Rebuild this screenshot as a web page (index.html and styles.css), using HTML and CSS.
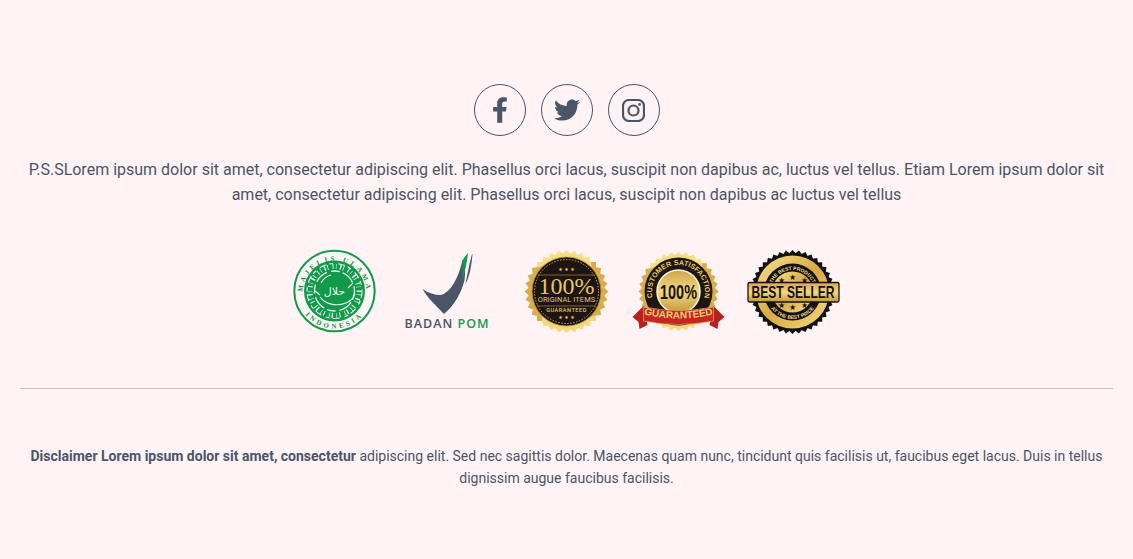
FILE: index.html
```html
<!DOCTYPE html>
<html lang="en">
<head>
    <meta charset="UTF-8">
    <meta name="viewport" content="width=device-width, initial-scale=1.0">
    <title>Footer</title>
    <link rel="stylesheet" href="styles.css">
</head>
<body>
    <footer class="footer">
        <div class="socials">
            <a class="social" href="#">
                <svg class="social-icon" viewBox="0 0 320 512" width="16" height="26"><path d="M279.14 288l14.22-92.66h-88.91v-60.13c0-25.35 12.42-50.06 52.24-50.06h40.42V6.26S260.43 0 225.36 0c-73.22 0-121.08 44.38-121.08 124.72v70.62H22.89V288h81.39v224h100.17V288z"/></svg>
            </a>
            <a class="social" href="#">
                <svg class="social-icon" viewBox="0 0 512 512" width="26" height="26"><path d="M459.37 151.716c.325 4.548.325 9.097.325 13.645 0 138.72-105.583 298.558-298.558 298.558-59.452 0-114.68-17.219-161.137-47.106 8.447.974 16.568 1.299 25.34 1.299 49.055 0 94.213-16.568 130.274-44.832-46.132-.975-84.792-31.188-98.112-72.772 6.498.974 12.995 1.624 19.818 1.624 9.421 0 18.843-1.3 27.614-3.573-48.081-9.747-84.143-51.98-84.143-102.985v-1.299c13.969 7.797 30.214 12.67 47.431 13.319-28.264-18.843-46.781-51.005-46.781-87.391 0-19.492 5.197-37.36 14.294-52.954 51.655 63.675 129.3 105.258 216.365 109.807-1.624-7.797-2.599-15.918-2.599-24.04 0-57.828 46.782-104.934 104.934-104.934 30.213 0 57.502 12.67 76.67 33.137 23.715-4.548 46.456-13.32 66.599-25.34-7.798 24.366-24.366 44.833-46.132 57.827 21.117-2.273 41.584-8.122 60.426-16.243-14.292 20.791-32.161 39.308-52.628 54.253z"/></svg>
            </a>
            <a class="social" href="#">
                <svg class="social-icon insta" viewBox="0 0 23 23" width="23" height="23"><rect x="1" y="1" width="21" height="21" rx="6"/><circle cx="11.5" cy="11.5" r="5"/><circle class="insta-dot" cx="17.6" cy="5.4" r="1.4"/></svg>
            </a>
        </div>

        <p class="intro">P.S.SLorem ipsum dolor sit amet, consectetur adipiscing elit. Phasellus orci lacus, suscipit non dapibus ac, luctus vel tellus. Etiam Lorem ipsum dolor sit amet, consectetur adipiscing elit. Phasellus orci lacus, suscipit non dapibus ac luctus vel tellus</p>

        <div class="badges">
            <!-- halal seal -->
            <svg class="badge" viewBox="0 0 112 90">
                <defs>
                    <path id="mui-top" d="M 15.5 46 A 32 32 0 0 1 79.5 46"/>
                    <path id="mui-bottom" d="M 10 44 A 37.5 37.5 0 0 0 85 44"/>
                    <linearGradient id="gold" x1="0" y1="0" x2="1" y2="1">
                        <stop offset="0" stop-color="#f8e48e"/>
                        <stop offset=".5" stop-color="#d9aa45"/>
                        <stop offset="1" stop-color="#f6dd84"/>
                    </linearGradient>
                    <linearGradient id="gold-flat" x1="0" y1="0" x2="0" y2="1">
                        <stop offset="0" stop-color="#cfa54c"/>
                        <stop offset=".5" stop-color="#f4d981"/>
                        <stop offset="1" stop-color="#c2963d"/>
                    </linearGradient>
                    <g id="star-32">
                        <rect x="-1" y="-1" width="2" height="2"/>
                        <rect x="-1" y="-1" width="2" height="2" transform="rotate(11.25)"/>
                        <rect x="-1" y="-1" width="2" height="2" transform="rotate(22.5)"/>
                        <rect x="-1" y="-1" width="2" height="2" transform="rotate(33.75)"/>
                        <rect x="-1" y="-1" width="2" height="2" transform="rotate(45)"/>
                        <rect x="-1" y="-1" width="2" height="2" transform="rotate(56.25)"/>
                        <rect x="-1" y="-1" width="2" height="2" transform="rotate(67.5)"/>
                        <rect x="-1" y="-1" width="2" height="2" transform="rotate(78.75)"/>
                    </g>
                    <g id="star-40">
                        <rect x="-1" y="-1" width="2" height="2"/>
                        <rect x="-1" y="-1" width="2" height="2" transform="rotate(9)"/>
                        <rect x="-1" y="-1" width="2" height="2" transform="rotate(18)"/>
                        <rect x="-1" y="-1" width="2" height="2" transform="rotate(27)"/>
                        <rect x="-1" y="-1" width="2" height="2" transform="rotate(36)"/>
                        <rect x="-1" y="-1" width="2" height="2" transform="rotate(45)"/>
                        <rect x="-1" y="-1" width="2" height="2" transform="rotate(54)"/>
                        <rect x="-1" y="-1" width="2" height="2" transform="rotate(63)"/>
                        <rect x="-1" y="-1" width="2" height="2" transform="rotate(72)"/>
                        <rect x="-1" y="-1" width="2" height="2" transform="rotate(81)"/>
                    </g>
                </defs>
                <circle cx="47.500" cy="44" r="40.200" fill="#fdf8f5" stroke="#129a4b" stroke-width="2"/>
                <text class="mui-text"><textPath href="#mui-top" startOffset="50%" text-anchor="middle">MAJELIS ULAMA</textPath></text>
                <text class="mui-text"><textPath href="#mui-bottom" startOffset="50%" text-anchor="middle">INDONESIA</textPath></text>
                <circle cx="47.500" cy="44" r="30.500" fill="#129a4b"/>
                <circle cx="47.500" cy="44" r="24.500" fill="none" stroke="#e6f4e9" stroke-width="5" stroke-dasharray="1 2.500 .6 3.500 1.400 1.800 .8 4.500"/>
                <circle cx="47.500" cy="44" r="27.500" fill="none" stroke="#e6f4e9" stroke-width="1.100" stroke-dasharray="7 3 4 5"/>
                <circle cx="47.500" cy="44" r="20" fill="none" stroke="#e6f4e9" stroke-width="1.300" stroke-dasharray="9 3 14 4"/>
                <path d="M33 50c5 7 16 10 26 6 5-2 8-6 9-10M34 36c2-4 6-7 10-8M28 44l5 4M66 36l-5 5" fill="none" stroke="#e6f4e9" stroke-width="1.100"/>
                <text class="mui-arabic" x="47.500" y="48">حلال</text>
            </svg>

            <!-- badan pom -->
            <svg class="badge" viewBox="0 0 112 90">
                <path d="M23.500 42c6 4 12 6 18 6 10-2 18-17 22-35 3 6 3 14 2 20-3 13-10 25-20.500 34C38 59 29 52 23.500 42z" fill="#4a5568"/>
                <path d="M63 14c2-3 4-6 6-8-1 9-3 19-6 28 1-7 1-14 0-20z" fill="#129a4b"/>
                <path d="M73.500 7c-1 12-3 23-7 30 2-10 4-21 6.500-30z" fill="#4a5568"/>
                <text class="pom-text" x="5.500" y="81">BADAN <tspan class="pom-green">POM</tspan></text>
            </svg>

            <!-- 100% original -->
            <svg class="badge" viewBox="0 0 112 90">
                <use href="#star-32" transform="translate(55.5 44.5) scale(29.5)" fill="url(#gold)"/>
                <circle cx="55.500" cy="44.500" r="34.500" fill="#1c1512" stroke="#b98d38" stroke-width=".8"/>
                <circle cx="55.500" cy="44.500" r="32" fill="none" stroke="#d3a844" stroke-width="1" stroke-dasharray="1.500 1.500"/>
                <path d="M27 28h57M26 59h59" stroke="#a9843a" stroke-width=".7"/>
                <text class="gold-text orig-100" x="55.500" y="47">100%</text>
                <text class="gold-text orig-line" x="55.500" y="55">ORIGINAL ITEMS</text>
                <text class="gold-text orig-small" x="55.500" y="64.500">GUARANTEED</text>
                <text class="gold-text orig-star" x="55.500" y="24">★ ★ ★</text>
                <text class="gold-text orig-star" x="55.500" y="72">★ ★ ★</text>
            </svg>

            <!-- customer satisfaction -->
            <svg class="badge" viewBox="0 0 112 90">
                <defs>
                    <path id="sat-top" d="M 34 60 A 26.500 26.500 0 1 1 77 60"/>
                    <path id="ribbon-curve" d="M 23 68 Q 55.500 75 88 68"/>
                </defs>
                <use href="#star-32" transform="translate(55.5 44.5) scale(28.3)" fill="url(#gold)"/>
                <circle cx="55.500" cy="44.500" r="34" fill="#1d1712"/>
                <circle cx="55.500" cy="44.500" r="21.500" fill="url(#gold-flat)" stroke="#fff3e0" stroke-width="1.500"/>
                <text class="gold-text sat-text"><textPath href="#sat-top" startOffset="50%" text-anchor="middle">CUSTOMER SATISFACTION</textPath></text>
                <text class="sat-100" x="55.500" y="52" textLength="37" lengthAdjust="spacingAndGlyphs">100%</text>
                <path d="M9.500 70l11-11 4 19-8 4-1-7z" fill="#b81f1f"/>
                <path d="M101.500 70l-11-11-4 19 8 4 1-7z" fill="#b81f1f"/>
                <path d="M20.500 60q35 7 70 0v14q-35 7-70 0z" fill="#c7251f" stroke="#e8c566" stroke-width=".6"/>
                <text class="ribbon-text"><textPath href="#ribbon-curve" startOffset="50%" text-anchor="middle">GUARANTEED</textPath></text>
            </svg>

            <!-- best seller -->
            <svg class="badge" viewBox="0 0 112 90">
                <defs>
                    <path id="best-top" d="M 35.500 45 A 22 22 0 0 1 79.500 45"/>
                    <path id="best-bottom" d="M 30.500 45 A 27 27 0 0 0 84.500 45"/>
                </defs>
                <use href="#star-40" transform="translate(57.5 45) scale(29.7)" fill="#15110f"/>
                <circle cx="57.500" cy="45" r="36.500" fill="url(#gold)"/>
                <circle cx="57.500" cy="45" r="28.500" fill="#15110f"/>
                <circle cx="57.500" cy="45" r="20.500" fill="url(#gold)"/>
                <text class="best-arc"><textPath href="#best-top" startOffset="50%" text-anchor="middle">THE BEST PRODUCT</textPath></text>
                <text class="best-arc"><textPath href="#best-bottom" startOffset="50%" text-anchor="middle">AT THE BEST PRICE</textPath></text>
                <text class="best-star" x="57.500" y="33">★</text>
                <text class="best-star" x="46.500" y="35.500">★</text>
                <text class="best-star" x="69.500" y="35.500">★</text>
                <text class="best-star" x="57.500" y="63">★</text>
                <text class="best-star" x="46.500" y="61">★</text>
                <text class="best-star" x="69.500" y="61">★</text>
                <rect x="13" y="35.500" width="91" height="19.500" rx="1.500" fill="url(#gold-flat)" stroke="#15110f" stroke-width="1.300"/>
                <text class="best-text" x="58" y="51" textLength="83" lengthAdjust="spacingAndGlyphs">BEST SELLER</text>
            </svg>
        </div>

        <hr class="divider">

        <p class="disclaimer"><strong>Disclaimer Lorem ipsum dolor sit amet, consectetur</strong> adipiscing elit. Sed nec sagittis dolor. Maecenas quam nunc, tincidunt quis facilisis ut, faucibus eget lacus. Duis in tellus dignissim augue faucibus facilisis.</p>
    </footer>
</body>
</html>
```

FILE: styles.css
```css
body {
    margin: 0;
    background-color: #fff3f5;
    color: #4a5568;
    font-family: Roboto, "Liberation Sans", sans-serif;
}
.footer {
    padding: 84px 20px 60px;
    text-align: center;
}
.socials {
    display: flex;
    justify-content: center;
    gap: 15px;
}
.social {
    display: flex;
    align-items: center;
    justify-content: center;
    width: 52px;
    height: 52px;
    box-sizing: border-box;
    border: 1px solid #4a5568;
    border-radius: 50%;
}
.social-icon {
    fill: #4a5568;
}
.insta {
    fill: none;
    stroke: #4a5568;
    stroke-width: 2.2;
}
.insta .insta-dot {
    fill: #4a5568;
    stroke: none;
}
.intro {
    margin: 21px 0 0;
    font-size: 16px;
    line-height: 25px;
}
.badges {
    display: flex;
    justify-content: center;
    margin-top: 40px;
}
.badge {
    display: block;
    width: 112px;
    height: 90px;
}
.divider {
    margin: 51px 0 0;
    border: 0;
    border-top: 1px solid #cdbfc1;
}
.disclaimer {
    margin: 56px 0 0;
    font-size: 14px;
    line-height: 22px;
}

/* badge lettering */
.mui-text {
    font-family: "Liberation Serif", serif;
    font-size: 7px;
    font-weight: bold;
    letter-spacing: 3px;
    fill: #128f46;
}
.mui-arabic {
    font-family: "DejaVu Sans", sans-serif;
    font-size: 11px;
    text-anchor: middle;
    fill: #e6f4e9;
}
.pom-text {
    font-family: "Open Sans", sans-serif;
    font-size: 12.5px;
    font-weight: 600;
    letter-spacing: 1px;
    fill: #4a5568;
}
.pom-green {
    fill: #129a4b;
}
.gold-text {
    fill: #e8c566;
    text-anchor: middle;
}
.orig-100 {
    font-family: "Liberation Serif", serif;
    font-size: 24px;
}
.orig-line {
    font-family: Roboto, sans-serif;
    font-size: 7.4px;
    letter-spacing: .1px;
}
.orig-small {
    font-family: Roboto, sans-serif;
    font-size: 5.6px;
    font-weight: 500;
    letter-spacing: .5px;
}
.orig-star {
    font-family: "DejaVu Sans", sans-serif;
    font-size: 5px;
}
.sat-text {
    font-family: "Liberation Sans", sans-serif;
    font-size: 7.2px;
    font-weight: bold;
}
.sat-100 {
    font-family: "Liberation Sans", sans-serif;
    font-size: 20px;
    font-weight: bold;
    text-anchor: middle;
    fill: #17120e;
}
.ribbon-text {
    font-family: "Liberation Sans", sans-serif;
    font-size: 10px;
    font-weight: bold;
    letter-spacing: -.1px;
    fill: #efcf7a;
}
.best-arc {
    font-family: "Liberation Sans", sans-serif;
    font-size: 5px;
    font-weight: bold;
    fill: #f3dd96;
}
.best-star {
    font-family: "DejaVu Sans", sans-serif;
    font-size: 8px;
    text-anchor: middle;
    fill: #15110f;
}
.best-text {
    font-family: "Liberation Sans", sans-serif;
    font-size: 16.5px;
    font-weight: bold;
    text-anchor: middle;
    fill: #15110f;
}
```
